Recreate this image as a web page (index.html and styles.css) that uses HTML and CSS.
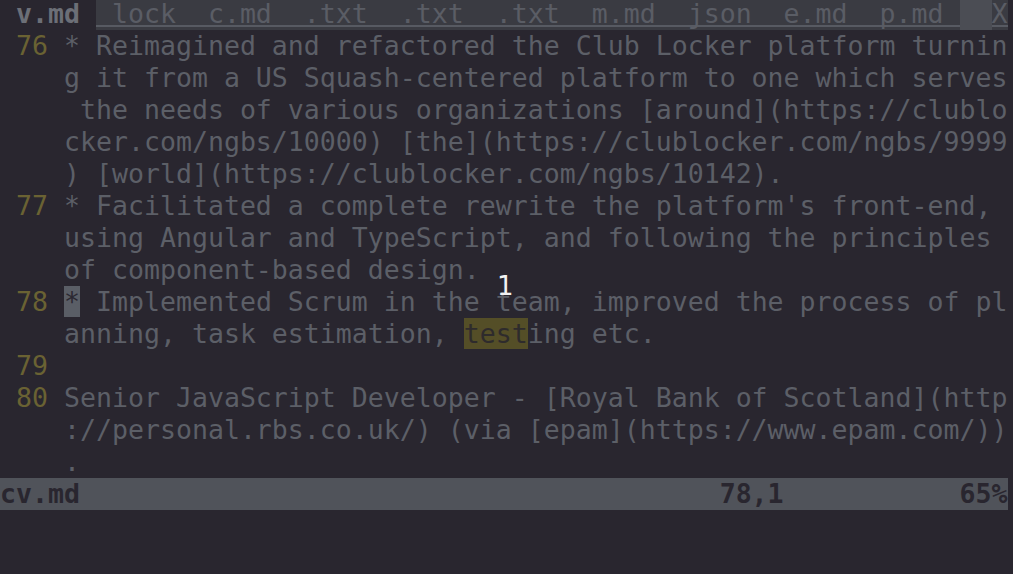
FILE: index.html
```html
<!DOCTYPE html>
<html>
<head>
<meta charset="utf-8">
<link rel="stylesheet" href="styles.css">
</head>
<body>
<div class="term">
  <div class="tabline"><span class="tab-sel"> v.md </span><span class="tab"> lock  c.md  .txt  .txt  .txt  m.md  json  e.md  p.md </span><span class="tabfill">  </span><span class="tab">X</span></div>
  <div class="buf">
    <div class="row"><span class="nr"> 76 </span>* Reimagined and refactored the Club Locker platform turnin</div>
    <div class="row"><span class="nr">    </span>g it from a US Squash-centered platform to one which serves</div>
    <div class="row"><span class="nr">    </span> the needs of various organizations [around](https://clublo</div>
    <div class="row"><span class="nr">    </span>cker.com/ngbs/10000) [the](https://clublocker.com/ngbs/9999</div>
    <div class="row"><span class="nr">    </span>) [world](https://clublocker.com/ngbs/10142).</div>
    <div class="row"><span class="nr"> 77 </span>* Facilitated a complete rewrite the platform's front-end,</div>
    <div class="row"><span class="nr">    </span>using Angular and TypeScript, and following the principles</div>
    <div class="row"><span class="nr">    </span>of component-based design.</div>
    <div class="row"><span class="nr"> 78 </span><span class="cursor">*</span> Implemented Scrum in the team, improved the process of pl</div>
    <div class="row"><span class="nr">    </span>anning, task estimation, <span class="search">test</span>ing etc.</div>
    <div class="row"><span class="nr"> 79 </span></div>
    <div class="row"><span class="nr"> 80 </span>Senior JavaScript Developer - [Royal Bank of Scotland](http</div>
    <div class="row"><span class="nr">    </span>://personal.rbs.co.uk/) (via [epam](https://www.epam.com/))</div>
    <div class="row"><span class="nr">    </span>.</div>
  </div>
  <div class="status">cv.md                                        78,1           65%</div>
  <div class="cmdline"> </div>
  <div class="overlay">1</div>
</div>
</body>
</html>
```

FILE: styles.css
```css
html, body {
  margin: 0;
  padding: 0;
  background: #29262f;
}
.term {
  position: relative;
  width: 1013px;
  height: 574px;
  overflow: hidden;
  background: #29262f;
  font-family: "DejaVu Sans Mono", monospace;
  font-size: 26.57px;
  color: #5c5f67;
}
.tabline {
  height: 30px;
  line-height: 28px;
  white-space: pre;
  display: flex;
  align-items: flex-start;
}
.tabline span {
  display: block;
  height: 30px;
}
.tab-sel {
  font-weight: bold;
  color: #6c6f77;
  background: #29262f;
}
.tab {
  color: #5a5d65;
  background: linear-gradient(to bottom, #3a3b42 0, #3a3b42 25px, #575a62 25px, #575a62 27px, #3a3b42 27px, #3a3b42 30px);
}
.tabfill {
  background: #4b4d54;
}
.buf {
  display: flex;
  flex-direction: column;
}
.row {
  height: 32px;
  line-height: 32px;
  white-space: pre;
}
.nr {
  color: #6a6233;
}
.cursor {
  background: #5a5e66;
  color: #2b2831;
}
.search {
  background: #544e27;
  color: #2e2b2c;
}
.status {
  height: 32px;
  line-height: 32px;
  width: 1008px;
  white-space: pre;
  background: #50535a;
  color: #29262f;
  font-weight: bold;
}
.cmdline {
  height: 32px;
  line-height: 32px;
  white-space: pre;
}
.overlay {
  position: absolute;
  left: 497px;
  top: 270px;
  font-family: "DejaVu Sans", sans-serif;
  font-size: 26px;
  line-height: 32px;
  color: #f2f2f2;
}
```
